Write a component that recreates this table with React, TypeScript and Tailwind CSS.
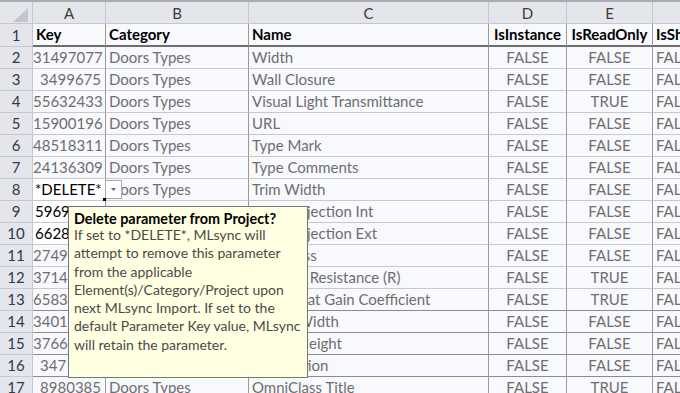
type Row = {
  n: number
  key: string
  keyDark?: boolean
  keyLeft?: boolean
  cat: string
  name: string
  d: string
  e: string
  darkBottom?: boolean
}

const rows: Row[] = [
  { n: 2, key: '31497077', cat: 'Doors Types', name: 'Width', d: 'FALSE', e: 'FALSE' },
  { n: 3, key: '3499675', cat: 'Doors Types', name: 'Wall Closure', d: 'FALSE', e: 'FALSE' },
  { n: 4, key: '55632433', cat: 'Doors Types', name: 'Visual Light Transmittance', d: 'FALSE', e: 'TRUE' },
  { n: 5, key: '15900196', cat: 'Doors Types', name: 'URL', d: 'FALSE', e: 'FALSE' },
  { n: 6, key: '48518311', cat: 'Doors Types', name: 'Type Mark', d: 'FALSE', e: 'FALSE' },
  { n: 7, key: '24136309', cat: 'Doors Types', name: 'Type Comments', d: 'FALSE', e: 'FALSE' },
  { n: 8, key: '*DELETE*', keyDark: true, keyLeft: true, cat: 'Doors Types', name: 'Trim Width', d: 'FALSE', e: 'FALSE' },
  { n: 9, key: '59691842', keyDark: true, keyLeft: true, cat: 'Doors Types', name: 'Trim Projection Int', d: 'FALSE', e: 'FALSE' },
  { n: 10, key: '66281507', keyDark: true, keyLeft: true, cat: 'Doors Types', name: 'Trim Projection Ext', d: 'FALSE', e: 'FALSE' },
  { n: 11, key: '27493318', cat: 'Doors Types', name: 'Thickness', d: 'FALSE', e: 'FALSE' },
  { n: 12, key: '37146620', cat: 'Doors Types', name: 'Thermal Resistance (R)', d: 'FALSE', e: 'TRUE' },
  { n: 13, key: '65834119', cat: 'Doors Types', name: 'Solar Heat Gain Coefficient', d: 'FALSE', e: 'TRUE', darkBottom: true },
  { n: 14, key: '34012876', cat: 'Doors Types', name: 'Rough Width', d: 'FALSE', e: 'FALSE', darkBottom: true },
  { n: 15, key: '37665210', cat: 'Doors Types', name: 'Rough Height', d: 'FALSE', e: 'FALSE', darkBottom: true },
  { n: 16, key: '3471095', cat: 'Doors Types', name: 'Description', d: 'FALSE', e: 'FALSE', darkBottom: true },
  { n: 17, key: '8980385', cat: 'Doors Types', name: 'OmniClass Title', d: 'FALSE', e: 'TRUE' },
]

const tipLines = [
  'If set to *DELETE*, MLsync will',
  'attempt to remove this parameter',
  'from the applicable',
  'Element(s)/Category/Project upon',
  'next MLsync Import. If set to the',
  'default Parameter Key value, MLsync',
  'will retain the parameter.',
]

function HeadCell({ label, className }: { label: string; className: string }): JSX.Element {
  return (
    <div className={`${className} shrink-0 border-r border-[#c5c8ce] text-center leading-[22px] text-[#3b3b3b]`}>
      {label}
    </div>
  )
}

export default function App(): JSX.Element {
  return (
    <div
      className="relative h-[393px] w-[680px] overflow-hidden bg-[#f8f9fd] text-[15px]"
      style={{ fontFamily: 'Lato, "Open Sans", sans-serif' }}
    >
      {/* column letters */}
      <div className="flex h-[24px] border-t-2 border-b border-t-[#a9acb2] border-b-[#c5c8ce] bg-[#e4e6eb]">
        <div className="relative w-[33px] shrink-0 border-r border-[#c5c8ce]">
          <svg className="absolute left-[13px] top-[6px]" width="15" height="14" viewBox="0 0 15 14">
            <polygon points="15,0 15,14 0,14" fill="#c3c6cc" />
          </svg>
        </div>
        <HeadCell label="A" className="w-[73px]" />
        <HeadCell label="B" className="w-[143px]" />
        <HeadCell label="C" className="w-[240px]" />
        <HeadCell label="D" className="w-[78px]" />
        <HeadCell label="E" className="w-[86px]" />
        <div className="flex-1" />
      </div>

      {/* row 1: field names */}
      <div className="flex h-[23px] font-bold text-black">
        <div className="w-[33px] shrink-0 border-r border-b border-[#c5c8ce] bg-[#e4e6eb] text-center font-normal leading-[22px] text-[#2f3a4a]">
          1
        </div>
        <div className="w-[73px] shrink-0 border-r border-b-2 border-r-[#9a9a9a] border-b-[#6e6e6e] pl-[3px] leading-[21px]">Key</div>
        <div className="w-[143px] shrink-0 border-r border-b-2 border-r-[#9a9a9a] border-b-[#6e6e6e] pl-[3px] leading-[21px]">Category</div>
        <div className="w-[240px] shrink-0 border-r border-b-2 border-r-[#9a9a9a] border-b-[#6e6e6e] pl-[3px] leading-[21px]">Name</div>
        <div className="w-[78px] shrink-0 overflow-hidden whitespace-nowrap border-r border-b-2 border-r-[#9a9a9a] border-b-[#6e6e6e] text-center leading-[21px]">IsInstance</div>
        <div className="w-[86px] shrink-0 overflow-hidden whitespace-nowrap border-r border-b-2 border-r-[#9a9a9a] border-b-[#6e6e6e] text-center leading-[21px]">IsReadOnly</div>
        <div className="flex-1 overflow-hidden whitespace-nowrap border-b-2 border-b-[#6e6e6e] pl-[3px] leading-[21px]">IsShared</div>
      </div>

      {/* data rows */}
      {rows.map((r) => {
        const cell = r.darkBottom
          ? 'shrink-0 overflow-hidden whitespace-nowrap border-r border-b border-r-[#9a9a9a] border-b-[#8c8c8c] leading-[21px]'
          : 'shrink-0 overflow-hidden whitespace-nowrap border-r border-b border-r-[#9a9a9a] border-b-[#c9c9c9] leading-[21px]'
        return (
          <div key={r.n} className="flex h-[22px] text-[#6e6e6e]">
            <div className="w-[33px] shrink-0 border-r border-b border-[#c5c8ce] bg-[#e4e6eb] text-center leading-[21px] text-[#2f3a4a]">
              {r.n}
            </div>
            <div
              className={[
                cell,
                'w-[73px]',
                r.keyDark ? 'bg-white text-black' : '',
                r.keyLeft ? 'pl-[2px] text-left' : 'pr-[4px] text-right',
              ].join(' ')}
            >
              {r.key}
            </div>
            <div className={`${cell} w-[143px] pl-[3px]`}>{r.cat}</div>
            <div className={`${cell} w-[240px] pl-[3px]`}>{r.name}</div>
            <div className={`${cell} w-[78px] text-center`}>{r.d}</div>
            <div className={`${cell} w-[86px] text-center`}>{r.e}</div>
            <div
              className={
                r.darkBottom
                  ? 'flex-1 overflow-hidden whitespace-nowrap border-b border-b-[#8c8c8c] pl-[3px] leading-[21px]'
                  : 'flex-1 overflow-hidden whitespace-nowrap border-b border-b-[#c9c9c9] pl-[3px] leading-[21px]'
              }
            >
              FALSE
            </div>
          </div>
        )
      })}

      {/* dropdown arrow of the validated cell */}
      <div className="absolute left-[105px] top-[180px] flex h-[19px] w-[17px] items-center justify-center border border-[#a9a9a9] bg-white">
        <svg width="5" height="3" viewBox="0 0 5 3">
          <polygon points="0,0 5,0 2.5,3" fill="#6a6a6a" />
        </svg>
      </div>
      {/* fill handle */}
      <div className="absolute left-[103px] top-[198px] h-[3px] w-[3px] bg-black" />

      {/* input message tooltip */}
      <div className="absolute left-[68px] top-[206px] h-[172px] w-[240px] border border-[#767676] bg-[#ffffe1] px-[5px] pt-[5px] text-[14px] leading-[18.3px]">
        <div className="whitespace-nowrap text-[14.4px] font-bold leading-[14px] text-black">Delete parameter from Project?</div>
        {tipLines.map((l) => (
          <div key={l} className="whitespace-nowrap text-[#4a4a4a]">
            {l}
          </div>
        ))}
      </div>
    </div>
  )
}
